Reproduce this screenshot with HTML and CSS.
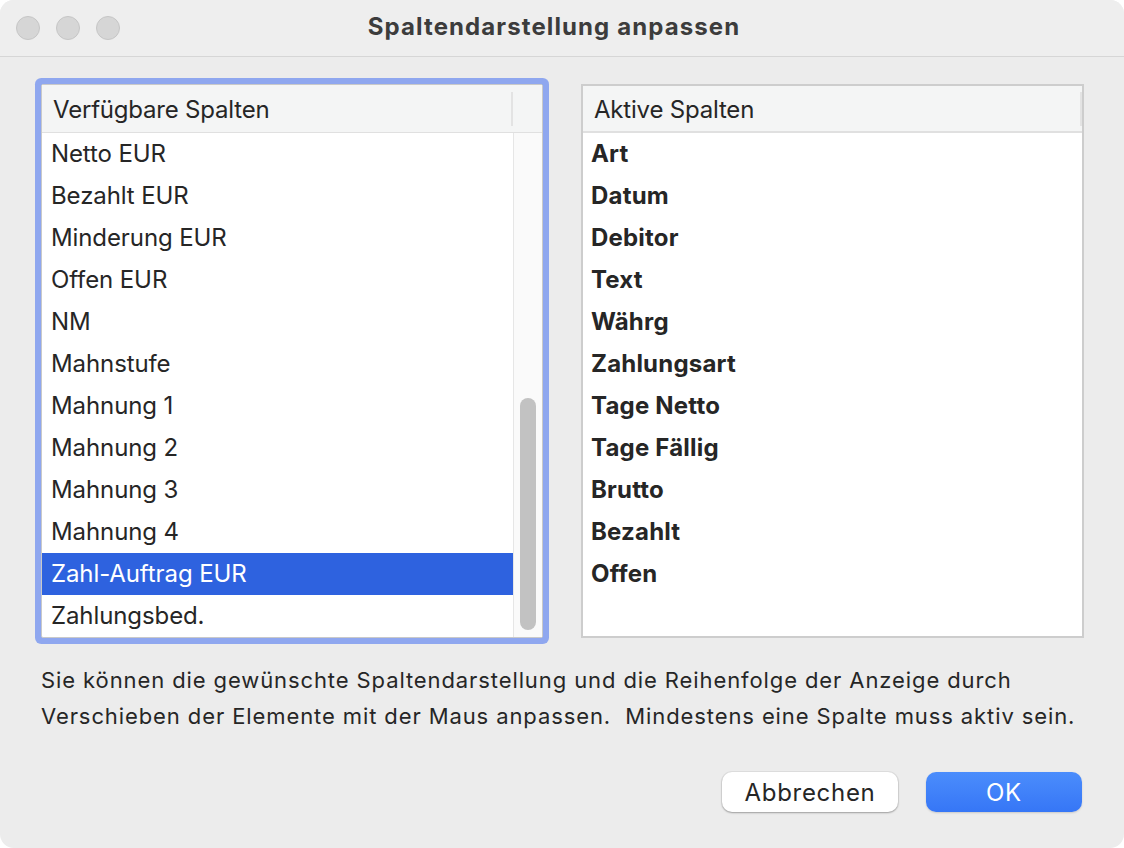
FILE: index.html
```html
<!DOCTYPE html>
<html lang="de">
  <head>
    <meta name="viewport" content="width=device-width, initial-scale=1.0" />
    <link rel="stylesheet" href="styles.css">
  </head>
  <body>
    <div class="window">
      <header class="titlebar">
        <div class="lights">
          <span class="light"></span>
          <span class="light"></span>
          <span class="light"></span>
        </div>
        <h1 class="title">Spaltendarstellung anpassen</h1>
        <div></div>
      </header>

      <main class="content">
        <div class="lists">
          <div class="list focused">
            <div class="list-head">
              <span class="col">Verfügbare Spalten</span>
              <span class="sep"></span>
              <span class="head-fill"></span>
            </div>
            <div class="list-body">
              <ul class="rows">
                <li>Netto EUR</li>
                <li>Bezahlt EUR</li>
                <li>Minderung EUR</li>
                <li>Offen EUR</li>
                <li>NM</li>
                <li>Mahnstufe</li>
                <li>Mahnung 1</li>
                <li>Mahnung 2</li>
                <li>Mahnung 3</li>
                <li>Mahnung 4</li>
                <li class="selected">Zahl-Auftrag EUR</li>
                <li>Zahlungsbed.</li>
              </ul>
              <div class="scroll"><div class="thumb"></div></div>
            </div>
          </div>

          <div class="list active">
            <div class="list-head">
              <span class="col">Aktive Spalten</span>
              <span class="sep"></span>
            </div>
            <div class="list-body">
              <ul class="rows bold">
                <li>Art</li>
                <li>Datum</li>
                <li>Debitor</li>
                <li>Text</li>
                <li>Währg</li>
                <li>Zahlungsart</li>
                <li>Tage Netto</li>
                <li>Tage Fällig</li>
                <li>Brutto</li>
                <li>Bezahlt</li>
                <li>Offen</li>
              </ul>
            </div>
          </div>
        </div>

        <p class="hint">Sie können die gewünschte Spaltendarstellung und die Reihenfolge der Anzeige durch<br>Verschieben der Elemente mit der Maus anpassen.&nbsp; Mindestens eine Spalte muss aktiv sein.</p>

        <div class="actions">
          <button type="button" class="btn">Abbrechen</button>
          <button type="button" class="btn primary">OK</button>
        </div>
      </main>
    </div>
  </body>
</html>
```

FILE: styles.css
```css
body {
  margin: 0;
  background: #ffffff;
  font-family: "Inter", "Noto Sans", sans-serif;
  color: #262626;
}
.window {
  width: 1124px;
  height: 848px;
  background: #ececec;
  border-radius: 14px;
  overflow: hidden;
}
.titlebar {
  height: 56px;
  border-bottom: 1px solid #d6d6d6;
  background: #eeeeee;
  display: grid;
  grid-template-columns: 1fr auto 1fr;
  align-items: center;
}
.lights {
  display: flex;
  gap: 16px;
  padding-left: 16px;
}
.light {
  width: 22px;
  height: 22px;
  border-radius: 50%;
  background: #d6d6d6;
  border: 1px solid #c6c6c6;
}
.title {
  margin: 0 0 3px 0;
  font-size: 24px;
  font-weight: 700;
  color: #3c3c3c;
  letter-spacing: 1.1px;
  padding-right: 16px;
}
.content {
  padding: 27px 40px 0 41px;
}
.lists {
  display: grid;
  grid-template-columns: 502px 503px;
  gap: 38px;
}
.list {
  height: 554px;
  box-sizing: border-box;
  background: #ffffff;
  display: flex;
  flex-direction: column;
}
.list.focused {
  border: 1px solid #c9c9c9;
  border-radius: 2px;
  box-shadow: 0 0 0 6px #8fa7ef;
}
.list.active {
  border: 2px solid #cdcdcd;
}
.list-head {
  height: 48px;
  box-sizing: border-box;
  background: #f4f5f5;
  border-bottom: 1px solid #e0e0e0;
  display: flex;
  align-items: center;
}
.list.active .list-head {
  height: 47px;
  border-bottom-width: 2px;
}
.col {
  flex: 1;
  padding-left: 11px;
  padding-top: 1px;
  font-size: 24px;
  letter-spacing: -0.2px;
}
.sep {
  width: 2px;
  height: 34px;
  background: #e3e3e3;
}
.head-fill {
  width: 29px;
}
.list-body {
  flex: 1;
  display: flex;
  min-height: 0;
}
.rows {
  flex: 1;
  margin: 0;
  padding: 0;
  list-style: none;
}
.rows li {
  height: 42px;
  line-height: 42px;
  padding-left: 9px;
  font-size: 24px;
  letter-spacing: -0.1px;
}
.rows.bold li {
  padding-left: 8px;
  font-weight: 700;
  letter-spacing: 0.2px;
}
.rows li.selected {
  background: #2e62df;
  color: #ffffff;
}
.scroll {
  width: 29px;
  box-sizing: border-box;
  border-left: 1px solid #e6e6e6;
  background: #fafafa;
  display: flex;
  flex-direction: column;
  justify-content: flex-end;
  padding: 0 6px 7px 6px;
}
.thumb {
  width: 16px;
  height: 232px;
  border-radius: 8px;
  background: #c2c2c2;
}
.hint {
  margin: 24px 0 0 0;
  font-size: 22px;
  line-height: 36px;
  letter-spacing: 0.9px;
}
.actions {
  display: flex;
  justify-content: flex-end;
  gap: 28px;
  margin-top: 38px;
  padding-right: 2px;
}
.btn {
  width: 176px;
  height: 40px;
  border: none;
  border-radius: 10px;
  font-family: inherit;
  font-size: 24px;
  letter-spacing: 0.7px;
  color: #262626;
  background: #ffffff;
  box-shadow: 0 1px 2px rgba(0, 0, 0, 0.3), 0 0 0 1px rgba(0, 0, 0, 0.05);
}
.btn.primary {
  width: 156px;
  color: #ffffff;
  background: linear-gradient(#4b8dfc, #3676f6);
  box-shadow: 0 1px 2px rgba(0, 0, 0, 0.15);
}
```
